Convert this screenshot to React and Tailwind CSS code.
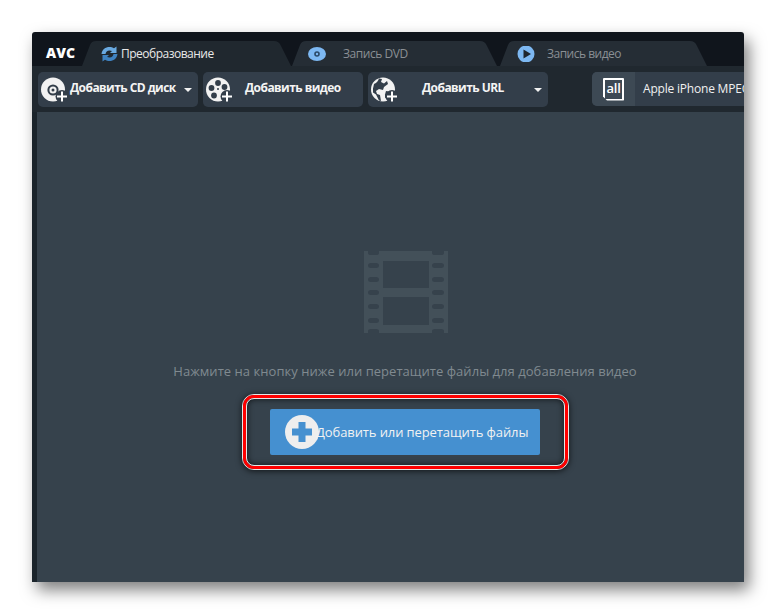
import React from "react";

const FONT = "font-['Open_Sans','Noto_Sans',sans-serif]";

const Tab = ({ width, fill, children, className = "" }) => (
  <div className={`relative h-[25px] ${className}`} style={{ width }}>
    <svg className="absolute inset-0" width={width} height="25">
      <path
        d={`M0 25 L8 4 Q9.5 0 14 0 L${width - 20} 0 Q${width - 15} 0 ${width - 13} 5 L${width - 3} 25 Z`}
        fill={fill}
      />
    </svg>
    <div className="relative flex h-full items-center">{children}</div>
  </div>
);

const PlusBadge = ({ x, y }) => (
  <g>
    <circle cx={x} cy={y} r="6.5" fill="#333e4a" />
    <path d={`M${x - 5} ${y}H${x + 5}M${x} ${y - 5}V${y + 5}`} stroke="#fff" strokeWidth="2" />
  </g>
);

const CdIcon = () => (
  <svg width="28" height="28" viewBox="0 0 28 28">
    <circle cx="13" cy="13.5" r="12" fill="#f2f2f2" />
    <circle cx="13" cy="14" r="5.6" fill="#333e4a" />
    <circle cx="13" cy="14" r="3.6" fill="#f2f2f2" />
    <circle cx="13" cy="14" r="1.5" fill="#333e4a" />
    <PlusBadge x={22} y={20.5} />
  </svg>
);

const ReelIcon = () => (
  <svg width="28" height="28" viewBox="0 0 28 28">
    <circle cx="13" cy="13.5" r="12" fill="#f2f2f2" />
    <circle cx="13" cy="7" r="2.9" fill="#333e4a" />
    <circle cx="6.5" cy="12" r="2.9" fill="#333e4a" />
    <circle cx="19.5" cy="11" r="2.9" fill="#333e4a" />
    <circle cx="9" cy="19.5" r="2.9" fill="#333e4a" />
    <circle cx="13" cy="13" r="1" fill="#333e4a" />
    <PlusBadge x={22} y={20.5} />
  </svg>
);

const GlobeIcon = () => (
  <svg width="28" height="28" viewBox="0 0 28 28">
    <circle cx="13" cy="13.5" r="12" fill="#f2f2f2" />
    <path d="M4 8c3-1 4-3 5-5.500l3 .5-1 3 3 1.500 3-2.500 1 3-4 3-1 3-4-1-3 2 1 3 3 1 1 6-2-.5-3-6-3-2 0-4Z" fill="#333e4a" />
    <path d="M16 15l3 .5-1 4-3 3 0-4Z" fill="#333e4a" />
    <PlusBadge x={22} y={20.5} />
  </svg>
);

const RefreshIcon = () => (
  <svg width="17" height="16" viewBox="0 0 17 16">
    <path d="M0.500 8C1 3.500 4.500 1 8.500 1c1.800 0 3.200.5 4.500 1.300L15.500 0.500V7h-6.500l2-2C10.200 4.700 9.500 4.500 8.500 4.500 6 4.500 5 6 4.500 8Z" fill="#69a9e0" />
    <path d="M16.500 8c-.5 4.500-4 7-8 7-1.800 0-3.200-.5-4.500-1.300L1.500 15.500V9h6.500l-2 2c.8.3 1.500.5 2.500.5 2.500 0 3.500-1.500 4-3.500Z" fill="#3f82c0" />
  </svg>
);

const EyeDiscIcon = () => (
  <svg width="18" height="14" viewBox="0 0 18 14">
    <ellipse cx="9" cy="7" rx="9" ry="7" fill="#7db8f2" />
    <circle cx="9" cy="7" r="2.800" fill="#2b4a68" />
    <circle cx="9" cy="7" r="1.200" fill="#7db8f2" />
  </svg>
);

const PlayIcon = () => (
  <svg width="18" height="16" viewBox="0 0 18 16">
    <circle cx="9" cy="8" r="8.500" fill="#7db8f2" />
    <path d="M6.500 3.500 14 8l-7.500 4.500Z" fill="#1f272f" />
  </svg>
);

const AllIcon = () => (
  <div className="relative h-[23px] w-[21px] rounded-[1px] border-2 border-white [clip-path:polygon(0_0,100%_0,100%_100%,4px_100%,0_calc(100%-4px))]">
    <span className="absolute inset-0 flex items-center justify-center pb-[1px] text-[13px] font-semibold leading-none tracking-[-0.2px] text-white">
      all
    </span>
  </div>
);

const Caret = () => (
  <svg width="8" height="4" viewBox="0 0 8 4">
    <path d="M0 0h8L4 4Z" fill="#f2f2f2" />
  </svg>
);

const ToolButton = ({ width, icon, label, labelClass, caret }) => (
  <div
    className="relative flex h-[35px] shrink-0 items-center rounded-[5px] bg-[#333e4a] pl-[2px]"
    style={{ width }}
  >
    {icon}
    <span className={`whitespace-nowrap pb-[3px] text-[12px] font-bold leading-none tracking-[-0.55px] text-[#f4f4f4] ${labelClass}`}>{label}</span>
    {caret && (
      <span className="ml-auto mr-[6px] mt-[1px] flex">
        <Caret />
      </span>
    )}
  </div>
);

const FilmIcon = () => (
  <svg width="85" height="84" viewBox="0 0 85 84">
    <path
      fillRule="evenodd"
      fill="#435059"
      d="M1 1H5V3Q5 5 8 5H13Q16 5 16 3V1H69V3Q69 5 72 5H78Q81 5 81 3V1H85V83H81V81Q81 79 78 79H72Q69 79 69 81V83H16V81Q16 79 13 79H8Q5 79 5 81V83H1Z
         M20 11V38H66V11Z M20 47V75H66V47Z
         M8 13Q5 13 5 15.500Q5 18 8 18H13Q16 18 16 15.500Q16 13 13 13Z
         M8 27Q5 27 5 29.500Q5 32 8 32H13Q16 32 16 29.500Q16 27 13 27Z
         M8 40Q5 40 5 42.500Q5 45 8 45H13Q16 45 16 42.500Q16 40 13 40Z
         M8 54Q5 54 5 56.500Q5 59 8 59H13Q16 59 16 56.500Q16 54 13 54Z
         M8 68Q5 68 5 70.500Q5 73 8 73H13Q16 73 16 70.500Q16 68 13 68Z
         M72 13Q69 13 69 15.500Q69 18 72 18H78Q81 18 81 15.500Q81 13 78 13Z
         M72 27Q69 27 69 29.500Q69 32 72 32H78Q81 32 81 29.500Q81 27 78 27Z
         M72 40Q69 40 69 42.500Q69 45 72 45H78Q81 45 81 42.500Q81 40 78 40Z
         M72 54Q69 54 69 56.500Q69 59 72 59H78Q81 59 81 56.500Q81 54 78 54Z
         M72 68Q69 68 69 70.500Q69 73 72 73H78Q81 73 81 70.500Q81 68 78 68Z"
    />
  </svg>
);

export default function App() {
  return (
    <div className={`h-[614px] w-[776px] overflow-hidden bg-white pl-[32px] pt-[32px] ${FONT}`}>
      <div className="flex h-[550px] w-[712px] flex-col overflow-hidden rounded-t-[3px] bg-[#10151c] shadow-[5px_8px_16px_rgba(0,0,0,0.5)]">
        {/* title bar with tabs */}
        <div className="flex h-[34px] shrink-0 items-end">
          <div className="mb-[1px] flex h-[25px] w-[50px] items-center pl-[14px] text-[14px] font-extrabold leading-none tracking-[0.1px] text-white">
            AVC
          </div>
          <Tab width={212} fill="#20282f">
            <span className="ml-[19px] flex">
              <RefreshIcon />
            </span>
            <span className="ml-[3px] text-[12px] leading-none tracking-[-0.5px] text-[#e8e8e8]">Преобразование</span>
          </Tab>
          <Tab width={208} fill="#252d35" className="-ml-[2px]">
            <span className="ml-[16px] flex">
              <EyeDiscIcon />
            </span>
            <span className="ml-[17px] text-[12px] leading-none tracking-[-0.45px] text-[#8a8f94]">Запись DVD</span>
          </Tab>
          <Tab width={210} fill="#252d35">
            <span className="ml-[17px] flex">
              <PlayIcon />
            </span>
            <span className="ml-[12px] text-[12px] leading-none tracking-[-0.5px] text-[#8a8f94]">Запись видео</span>
          </Tab>
        </div>

        {/* toolbar */}
        <div className="flex h-[46px] shrink-0 items-start gap-[5px] overflow-hidden bg-[#20282f] pl-[6px] pt-[6px]">
          <ToolButton width={160} icon={<CdIcon />} label="Добавить CD диск" labelClass="ml-[2px]" caret />
          <ToolButton width={160} icon={<ReelIcon />} label="Добавить видео" labelClass="ml-[12px]" />
          <ToolButton width={180} icon={<GlobeIcon />} label="Добавить URL" labelClass="ml-[24px]" caret />
          <div className="ml-[39px] flex h-[34px] w-[200px] shrink-0 items-center overflow-hidden rounded-[5px] bg-[#333e4a]">
            <div className="flex h-full w-[43px] shrink-0 items-center justify-center bg-[#3d4954]">
              <AllIcon />
            </div>
            <span className="ml-[8px] whitespace-nowrap text-[12px] leading-none tracking-[-0.2px] text-[#f0f0f0]">
              Apple iPhone MPEG-4 Movie
            </span>
          </div>
        </div>

        {/* content area, a bit wider than the visible window */}
        <div className="flex flex-1 overflow-hidden bg-[#1b242b] pl-[5px]">
          <div className="flex w-[736px] shrink-0 flex-col items-center bg-[#36424c] pt-[138px]">
            <FilmIcon />
            <p className="mt-[28px] text-[13px] leading-[18px] tracking-[0.04px] text-[#808a90]">
              Нажмите на кнопку ниже или перетащите файлы для добавления видео
            </p>
            <div className="mt-[14px] rounded-[12px] border border-[#e6e6e6] shadow-[0_1px_6px_rgba(0,0,0,0.7)]">
              <div className="rounded-[11px] border-[3px] border-[#ff0000]">
                <div className="rounded-[8px] border border-[#e6e6e6] px-[23.5px] py-[10px] shadow-[inset_0_0_6px_rgba(0,0,0,0.7)]">
                  <button className="flex h-[46px] w-[270px] items-center rounded-[2px] bg-[#4590d0] pl-[15px]">
                    <svg width="34" height="34" viewBox="0 0 34 34" className="shrink-0">
                      <circle cx="17" cy="17" r="17" fill="#eeeeee" />
                      <path d="M13.500 7h7v6.500H27v7h-6.500V27h-7v-6.500H7v-7h6.500Z" fill="#4590d0" />
                    </svg>
                    <span className="-ml-[3px] whitespace-nowrap text-[13px] leading-none tracking-[-0.1px] text-[#f2f2f2]">
                      Добавить или перетащить файлы
                    </span>
                  </button>
                </div>
              </div>
            </div>
          </div>
        </div>
      </div>
    </div>
  );
}
